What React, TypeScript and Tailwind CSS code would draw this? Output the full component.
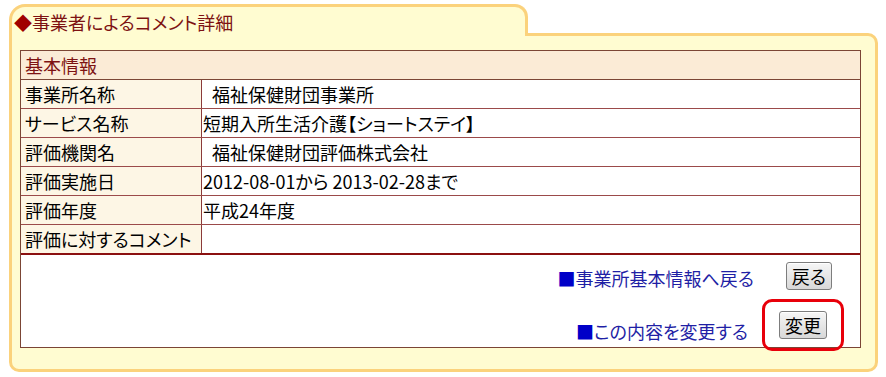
import React from 'react';

const rows: { label: string; value: string; indent?: boolean }[] = [
  { label: '事業所名称', value: '福祉保健財団事業所', indent: true },
  { label: 'サービス名称', value: '短期入所生活介護【ショートステイ】' },
  { label: '評価機関名', value: '福祉保健財団評価株式会社', indent: true },
  { label: '評価実施日', value: '2012-08-01から 2013-02-28まで' },
  { label: '評価年度', value: '平成24年度' },
  { label: '評価に対するコメント', value: '' },
];

const font = { fontFamily: '"Noto Sans CJK JP", "Noto Sans", sans-serif', fontFeatureSettings: '"palt"' };

function Btn({ children }: { children: React.ReactNode }) {
  return (
    <button className="h-[28px] px-[5px] rounded-[3px] border border-[#7d7d7d] bg-gradient-to-b from-[#f6f6f6] to-[#d8d8d8] text-[18px] leading-none text-black shadow-[inset_0_1px_0_#fff]">
      {children}
    </button>
  );
}

export default function App() {
  return (
    <div className="w-[886px] h-[377px] bg-white pt-[4px] pl-[9px]" style={font}>
      <div className="w-[869px] flex flex-col">
        {/* tab */}
        <div className="relative z-10 w-[519px] h-[32px] -mb-[3px] rounded-tl-[16px] rounded-tr-[13px] border-[3px] border-b-0 border-[#fbd27c] bg-[#fffcd1] flex items-center pl-[2px]">
          <span className="text-[18px] leading-none text-[#7d1212]">
            <span className="text-[#a00000]">◆</span>事業者によるコメント詳細
          </span>
        </div>
        {/* body */}
        <div className="h-[339px] rounded-tr-[10px] rounded-b-[10px] border-[3px] border-[#fbd27c] bg-[#fffcd1] pt-[14px] pl-[8px] pr-[14px]">
          <div className="border border-[#7b4535] bg-white text-[18px] leading-none">
            <div className="h-[28px] flex items-center pl-[4px] bg-[#fbebd6] text-[#7d1212]">基本情報</div>
            {rows.map((r, i) => (
              <div
                key={r.label}
                className={`flex h-[29px] border-t ${i === 0 ? 'border-[#7b4535]' : 'border-[#9b4a4a]'}`}
              >
                <div className="w-[181px] shrink-0 flex items-center pl-[4px] bg-[#fdf6e5] border-r border-[#8b3a3a] text-black">
                  {r.label}
                </div>
                <div className={`flex-1 flex items-center text-black ${r.indent ? 'pl-[10px]' : 'pl-[1px]'}`}>
                  {r.value}
                </div>
              </div>
            ))}
            <div className="border-t-2 border-[#8b1010] h-[94px] flex flex-col items-end pr-[28px] pt-[7px]">
              <div className="flex items-center">
                <span className="text-[#1f1fa5] mr-[32px] mt-[4px]">
                  <span className="text-[#0000c8]">■</span>事業所基本情報へ戻る
                </span>
                <Btn>戻る</Btn>
              </div>
              <div className="flex items-center mt-[9px] mr-[-12px]">
                <span className="text-[#1f1fa5] mr-[14px] mt-[12px]">
                  <span className="text-[#0000c8]">■</span>この内容を変更する
                </span>
                <div className="w-[82px] h-[52px] rounded-[10px] border-[3px] border-[#e8000a] flex items-center justify-center">
                  <Btn>変更</Btn>
                </div>
              </div>
            </div>
          </div>
        </div>
      </div>
    </div>
  );
}
